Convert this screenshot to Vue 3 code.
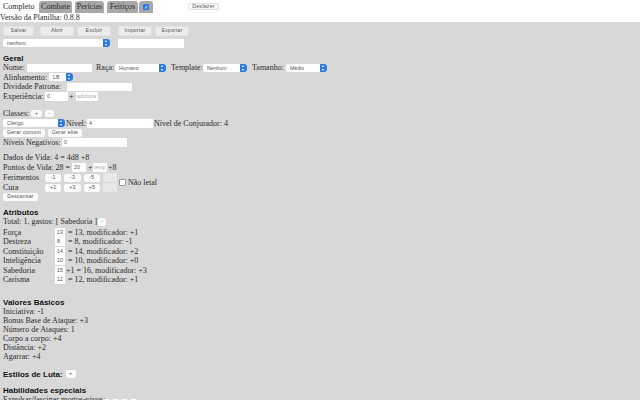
<script setup>
const atributos = [
  { nome: 'Força', v: '13', txt: '= 13, modificador: +1' },
  { nome: 'Destreza', v: '8', txt: '= 8, modificador: -1' },
  { nome: 'Constituição', v: '14', txt: '= 14, modificador: +2' },
  { nome: 'Inteligência', v: '10', txt: '= 10, modificador: +0' },
  { nome: 'Sabedoria', v: '15', txt: '+1 = 16, modificador: +3' },
  { nome: 'Carisma', v: '12', txt: '= 12, modificador: +1' },
]
const basicos = ['Iniciativa: -1', 'Bonus Base de Ataque: +3', 'Número de Ataques: 1', 'Corpo a corpo: +4', 'Distância: +2', 'Agarrar: +4']
</script>

<template>
  <div class="page">
    <header class="top">
      <nav class="tabs">
        <span class="tab first">Completo</span>
        <span class="tab t1">Combate</span>
        <span class="tab t2">Perícias</span>
        <span class="tab t3">Feitiços</span>
        <span class="tab t4"><span class="blue-check">✓</span></span>
        <button class="btn undo">Desfazer</button>
      </nav>
      <div class="version">Versão da Planilha: 0.8.8</div>
    </header>

    <main class="sheet">
      <div class="toolbar">
        <div class="col c1">
          <div class="row">
            <button class="btn big b1">Salvar</button>
            <button class="btn big b2">Abrir</button>
            <button class="btn big b2">Excluir</button>
          </div>
          <span class="sel w107"><span>nenhum</span><i class="arrows"></i></span>
        </div>
        <div class="col">
          <div class="row">
            <button class="btn big b2 first-b">Importar</button>
            <button class="btn big b2">Exportar</button>
          </div>
          <span class="inp w66"></span>
        </div>
      </div>

      <h3 class="line geral">Geral</h3>
      <div class="line">
        <span class="lb-nome">Nome:</span><span class="inp w65"></span>
        <span class="lb-raca">Raça:</span><span class="sel w51"><span>Humano</span><i class="arrows"></i></span>
        <span class="lb-temp">Template:</span><span class="sel w44"><span>Nenhum</span><i class="arrows"></i></span>
        <span class="lb-tam">Tamanho:</span><span class="sel w41"><span>Médio</span><i class="arrows"></i></span>
      </div>
      <div class="line"><span class="lb-al">Alinhamento:</span><span class="sel w24"><span>LB</span><i class="arrows"></i></span></div>
      <div class="line"><span class="lb-div">Dividade Patrona:</span><span class="inp w65"></span></div>
      <div class="line"><span class="lb-exp">Experiência:</span><span class="inp w23">0</span><span class="plus-exp">+</span><span class="inp w22 ghost">adiciona</span></div>

      <div class="line classes"><span class="lb-cl">Classes:</span><button class="btn tiny">+</button><button class="btn tiny2">-</button></div>
      <div class="line">
        <span class="sel w62"><span>Clérigo</span><i class="arrows"></i></span><span class="lb-niv">Nível:</span><span class="inp w66">4</span><span class="conj">Nível de Conjurador: 4</span>
      </div>
      <div class="line">
        <button class="btn gen g1">Gerar comum</button><button class="btn gen g2">Gerar elite</button>
      </div>
      <div class="line"><span class="lb-neg">Níveis Negativos:</span><span class="inp w65">0</span></div>

      <div class="line dados">Dados de Vida: 4 = 4d8 +8</div>
      <div class="line"><span class="lb-pv">Pontos de Vida: 28 =</span><span class="inp w14">20</span><span class="plus-pv">+</span><span class="inp w14 ghost">temp</span><span class="pv8">+8</span></div>
      <div class="vida">
        <div class="vida-grid">
          <span>Ferimentos</span>
          <button class="btn hp">-1</button><button class="btn hp">-3</button><button class="btn hp">-5</button>
          <span class="inp box"></span>
          <span>Cura</span>
          <button class="btn hp">+1</button><button class="btn hp">+3</button><button class="btn hp">+5</button>
          <span class="inp box"></span>
        </div>
        <label class="nl"><span class="cb"></span>Não letal</label>
      </div>
      <div class="rest"><button class="btn gen g3">Descansar</button></div>

      <h3 class="line atr">Atributos</h3>
      <div class="line total"><span class="lb-tot">Total: 1, gastos: [ Sabedoria ]</span><button class="btn minus">-</button></div>
      <div v-for="a in atributos" :key="a.nome" class="line attr">
        <span class="attr-name">{{ a.nome }}</span><span class="inp num">{{ a.v }}</span><span class="attr-txt" :class="{ plus: a.txt[0] === '+' }">{{ a.txt }}</span>
      </div>

      <h3 class="line vb">Valores Básicos</h3>
      <div v-for="b in basicos" :key="b" class="line basic">{{ b }}</div>

      <h3 class="line est">Estilos de Luta:<button class="btn est-btn">+</button></h3>
      <h3 class="line hab">Habilidades especiais</h3>
      <div class="line exp-row"><span class="lb-ex">Expulsar/fascinar mortos-vivos:</span><span class="sq"></span><span class="sq"></span><span class="sq"></span><span class="sq"></span></div>
    </main>
  </div>
</template>

<style>
html, body { margin: 0; padding: 0; overflow: hidden; background: #d8d8d8; }
</style>

<style scoped>
.page {
  width: 640px;
  height: 400px;
  overflow: hidden;
  background: #d8d8d8;
  font-family: "Liberation Serif", serif;
  font-size: 8px;
  color: #2a2a2a;
}
.top { background: #fff; height: 22px; }
.tabs { display: flex; align-items: flex-start; height: 12px; padding-top: 1px; }
.tab {
  height: 12px;
  line-height: 12px;
  font-size: 8px;
  text-align: center;
  white-space: nowrap;
  border-radius: 3px 3px 0 0;
  background: #a8a8a8;
}
.tab.first { width: 34px; margin-left: 3px; text-align: left; background: #fff; }
.t1 { width: 33px; margin-left: 2px; }
.t2 { width: 29px; margin-left: 3px; }
.t3 { width: 31px; margin-left: 3px; }
.t4 { width: 14px; margin-left: 1px; display: flex; justify-content: center; padding-top: 3px; box-sizing: border-box; }
.blue-check {
  width: 6px; height: 6px; background: #2f7de1; color: #fff; font-size: 5px; line-height: 6px;
  text-align: center; border-radius: 1px; font-family: "DejaVu Sans", sans-serif;
}
.btn {
  appearance: none;
  margin: 0;
  padding: 0;
  border: 0;
  border-radius: 2px;
  background: #fafafa;
  color: #555;
  font-family: "Liberation Sans", sans-serif;
  font-size: 5.2px;
  line-height: 1;
  text-align: center;
  letter-spacing: .2px;
  box-sizing: border-box;
  flex: none;
}
.undo { width: 31px; height: 7px; margin: 2px 0 0 35px; border: 1px solid #e0e0e0; }
.version { height: 9px; line-height: 9px; white-space: nowrap; font-size: 8px; }
.sheet { padding: 4px 0 0 3px; }
.toolbar { display: flex; }
.col { display: flex; flex-direction: column; gap: 3px; }
.c1 { width: 115px; }
.row { display: flex; gap: 3px; }
.btn.big { height: 10px; background: #ececec; border: 1px solid #e2e2e2; }
.b1 { width: 31px; margin-right: 3px; }
.b2 { width: 34px; }
.inp {
  display: inline-block;
  flex: none;
  background: #fff;
  height: 8.5px;
  line-height: 8.5px;
  font-family: "Liberation Sans", sans-serif;
  font-size: 5.2px;
  color: #555;
  padding-left: 2px;
  box-sizing: border-box;
  white-space: nowrap;
  overflow: hidden;
}
.ghost { color: #aaa; padding-left: 1px; }
.sel {
  display: flex;
  flex: none;
  justify-content: space-between;
  align-items: center;
  background: #fff;
  height: 8px;
  border-radius: 2px;
  font-family: "Liberation Sans", sans-serif;
  font-size: 5.2px;
  color: #555;
  padding-left: 4px;
  box-sizing: border-box;
  overflow: hidden;
}
.arrows {
  width: 7px; height: 8px; background: #2f7de1; border-radius: 0 2px 2px 0; position: relative; flex: none;
}
.arrows::before, .arrows::after {
  content: ""; position: absolute; left: 2px; border-left: 1.5px solid transparent; border-right: 1.5px solid transparent;
}
.arrows::before { top: 1px; border-bottom: 2px solid #fff; }
.arrows::after { bottom: 1px; border-top: 2px solid #fff; }
.w107 { width: 107px; }
.w66 { width: 66px; }
.w65 { width: 65px; }
.w62 { width: 62px; }
.w51 { width: 51px; }
.w44 { width: 44px; }
.w41 { width: 41px; }
.w24 { width: 24px; }
.w23 { width: 23px; }
.w22 { width: 22px; }
.w14 { width: 14px; }
h3 { margin: 0; font-family: "Liberation Sans", sans-serif; font-size: 8px; font-weight: bold; color: #111; }
.line { display: flex; align-items: center; height: 9.5px; white-space: nowrap; }
.geral { margin-top: 6px; }
.lb-nome { width: 24px; }
.lb-raca { width: 19px; margin-left: 4px; }
.lb-temp { width: 32px; margin-left: 5px; }
.lb-tam { width: 34px; margin-left: 5px; }
.lb-al { width: 46px; }
.lb-div { width: 64px; }
.lb-exp { width: 42px; }
.plus-exp { width: 8px; padding-left: 1px; box-sizing: border-box; }
.classes { margin-top: 8px; }
.lb-cl { width: 28px; }
.btn.tiny { width: 11px; height: 7px; }
.tiny2 { width: 9px; height: 7px; margin-left: 3px; }
.lb-niv { width: 22px; padding-left: 1px; box-sizing: border-box; }
.conj { margin-left: 1px; }
.btn.gen { height: 8px; }
.g1 { width: 42px; }
.g2 { width: 34px; margin-left: 3px; }
.g3 { width: 35px; height: 7px; display: block; }
.lb-neg { width: 59px; }
.dados { margin-top: 6px; }
.lb-pv { width: 69px; }
.plus-pv { width: 7px; padding-left: 2px; box-sizing: border-box; }
.pv8 { margin-left: 1px; }
.vida { display: flex; align-items: center; margin-top: 1px; }
.vida-grid { display: grid; grid-template-columns: 39px 16.33px 16.33px 16.33px 14px; column-gap: 3px; row-gap: 1px; align-items: center; }
.vida-grid > span:not(.inp) { height: 9px; line-height: 9px; }
.btn.hp { height: 8px; }
.box { width: 14px; height: 9px; background: #e8e8e8; }
.nl { display: flex; align-items: center; gap: 2px; margin-left: 2px; }
.cb { width: 5px; height: 5px; background: #fff; border: 1px solid #999; border-radius: 1px; box-sizing: content-box; }
.rest { margin-top: 1px; height: 7px; }
.atr { margin-top: 7.5px; height: 9px; }
.total { margin-top: .5px; }
.lb-tot { width: 95px; }
.btn.minus { width: 8px; height: 8px; }
.attr { height: 9.5px; }
.total + .attr { margin-top: 1px; }
.attr-name { width: 52px; }
.num { width: 10px; height: 9px; line-height: 9px; }
.attr-txt { margin-left: 3px; }
.attr-txt.plus { margin-left: 1px; }
.vb { margin-top: 13px; height: 9px; }
.basic { height: 9.1px; }
.est { margin-top: 8.5px; height: 9px; }
.est-btn { width: 10px; height: 8px; margin-left: 3px; }
.hab { margin-top: 7px; height: 9px; }
.exp-row { height: 9px; }
.lb-ex { width: 101px; overflow: visible; }
.sq { width: 5px; height: 5px; background: #fff; margin-right: 4px; align-self: flex-end; flex: none; }
</style>
